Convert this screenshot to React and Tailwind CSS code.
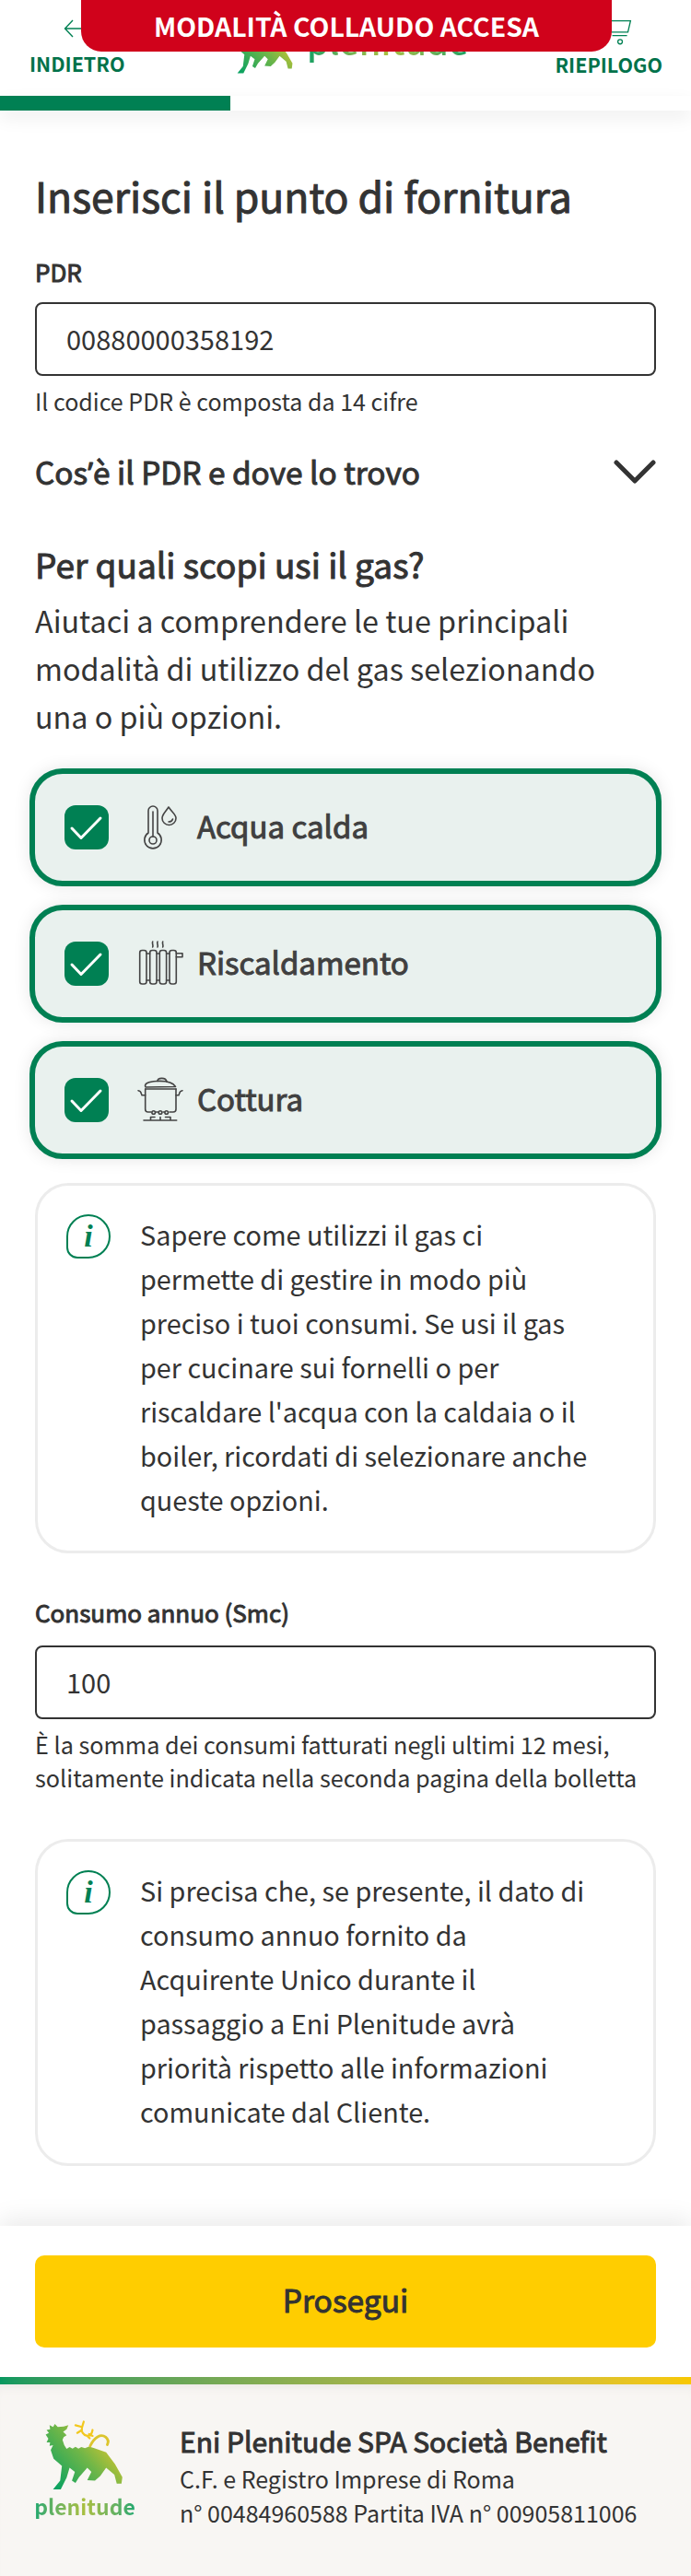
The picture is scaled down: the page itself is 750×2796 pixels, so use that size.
const G = "#008053";
const SB = "font-normal [-webkit-text-stroke:1px] ";

function Lion({ className, id }) {
  return (
    <svg viewBox="80 20 275 240" className={className}>
      <defs>
        <linearGradient id={id} x1="0.05" y1="0.95" x2="0.95" y2="0.25">
          <stop offset="0" stopColor="#00a063" />
          <stop offset="0.55" stopColor="#6fb648" />
          <stop offset="1" stopColor="#e8c82a" />
        </linearGradient>
      </defs>
      <path fill={`url(#${id})`} d="M85 70 L96 64 L88 54 L100 52 L98 38 L110 44 L116 34 L126 44 L146 42 L162 38 L156 52 L144 60 L150 66 L156 72 L146 78 L142 88 L148 106 L156 118 L166 112 L176 117 L186 111 L196 117 L206 112 L218 116 L232 110 L250 116 L290 130 L320 170 L345 214 L342 236 L326 236 L318 206 L290 182 L270 210 L252 226 L226 224 L240 196 L226 182 L198 214 L186 234 L174 226 L184 196 L166 182 L156 216 L136 256 L110 256 L134 226 L140 176 L112 152 L102 122 L110 106 L98 108 L100 96 L88 96 L94 84 Z" />
      <path fill="none" stroke="#dcc52d" strokeWidth="9" strokeLinecap="round" d="M236 108 C250 78 272 66 288 78 C298 86 298 96 294 104" />
      <path fill="none" stroke="#f2c81e" strokeWidth="7" strokeLinecap="round" d="M186 38 L208 44 M214 26 L208 46 C204 58 212 72 226 74 C236 74 242 66 244 54 M192 64 L208 54 M226 74 L234 82 M244 74 L232 68" />
    </svg>
  );
}

function Check() {
  return (
    <div className="w-[48px] h-[48px] rounded-[12px] bg-[#008053] shrink-0">
      <svg viewBox="0 0 48 48" className="w-[48px] h-[48px]">
        <path d="M8 25 L18 35.5 L39 14" fill="none" stroke="#fff" strokeWidth="3" strokeLinecap="round" strokeLinejoin="round" />
      </svg>
    </div>
  );
}

function IconBox({ children }) {
  return (
    <svg viewBox="0 0 48 48" className="w-[48px] h-[48px] ml-[32px] shrink-0 overflow-visible" fill="none" stroke="#444" strokeWidth="1.6" strokeLinecap="round" strokeLinejoin="round">
      {children}
    </svg>
  );
}

const Thermo = () => (
  <IconBox>
    <path d="M11 30 V6 a5 5 0 0 1 10 0 V30 a9.2 9.2 0 1 1 -10 0 Z" />
    <circle cx="16" cy="38" r="4" />
    <path d="M16 7 V34" />
    <path d="M33 2 C29 8 26 10 26 14 a7.5 7.5 0 0 0 15 0 C41 10 37 8 33 2 Z" />
    <path d="M33 18 C35 18 37 17 37.5 15" />
  </IconBox>
);

const Radiator = () => (
  <IconBox>
    <rect x="1.7" y="9.5" width="7.3" height="36.5" rx="2.5" />
    <rect x="12.7" y="9.5" width="7.3" height="36.5" rx="2.5" />
    <rect x="23.3" y="9.5" width="7.3" height="36.5" rx="2.5" />
    <rect x="34" y="9.5" width="7.3" height="36.5" rx="2.5" />
    <path d="M9 13 H12.7 M9 42 H12.7 M20 13 H23.3 M20 42 H23.3 M30.6 13 H34 M30.6 42 H34" />
    <path d="M41.3 12.7 H48 V16.7 H41.3" />
    <path d="M15.7 0 C14.7 2 16.7 4 15.7 6 M21 0 C20 2 22 4 21 6 M26.7 0 C25.7 2 27.7 4 26.7 6" />
  </IconBox>
);

const Pot = () => (
  <IconBox>
    <path d="M7.7 12 V34 a3 3 0 0 0 3 3 H14 M41 12 V34 a3 3 0 0 1 -3 3 H34 M19.5 37 H21.5 M27 37 H28.5" />
    <path d="M7.7 12 H41" />
    <path d="M0 13.7 C2 14 3 15 3.4 17 L4 18.7 H7.7 M48 13.7 C46 14 45 15 44.6 17 L44 18.7 H41" />
    <path d="M8 10 C6 6 11 4 20 3.5 C30 3 38 5 40.5 9.5 Z" />
    <path d="M21 3.5 C21 -0.5 30 -1 31 4" />
    <circle cx="16.7" cy="37.5" r="1.8" />
    <circle cx="24" cy="37.5" r="1.8" />
    <circle cx="30.7" cy="37.5" r="1.8" />
    <path d="M6 46 H41.7 M13.5 46 V42.5 H18 M24 46 V42.5 M35 46 V42.5 H29.5" />
  </IconBox>
);

function Option({ icon, label }) {
  return (
    <div className="h-[128px] ml-[32px] mr-[32px] flex items-center pl-[32px] bg-[#e9f1ee] border-[6px] border-[#008053] rounded-[36px] shadow-[0_0_18px_rgba(0,0,0,0.1)]">
      <Check />
      {icon}
      <span className={SB + "ml-[16px] -mt-[5px] text-[33px] leading-[48px] text-[#404040]"}>{label}</span>
    </div>
  );
}

function InfoCard({ lines, className }) {
  return (
    <div className={"mx-[38px] border-[3px] border-[#ececec] rounded-[36px] bg-white flex pl-[31px] pt-[31px] " + className}>
      <div className="w-[48px] h-[48px] border-[2.5px] border-[#008053] rounded-[24px_24px_24px_12px] shrink-0 flex items-center justify-center font-['Liberation_Serif',serif] italic font-bold text-[34px] leading-none text-[#008053]">i</div>
      <div className="ml-[32px] text-[28.8px] leading-[48px] text-[#333] -mt-[2px]">
        {lines.map((l) => (
          <div key={l} className="whitespace-nowrap">{l}</div>
        ))}
      </div>
    </div>
  );
}

function Input({ value }) {
  return (
    <div className="mx-[38px] h-[80px] border-2 border-[#333] rounded-[8px] flex items-center pl-[32px] text-[29px] text-[#333] bg-white">{value}</div>
  );
}

export default function App() {
  return (
    <div className="w-[750px] h-[2796px] bg-white overflow-hidden flex flex-col font-['Noto_Sans_CJK_SC',sans-serif] text-[#333]">
      <header className="relative h-[104px] shrink-0 bg-white flex justify-between pl-[32px] pr-[31px]">
        <div className="w-[104px] flex flex-col items-start">
          <svg viewBox="0 0 24 20" className="w-[26px] h-[20px] mt-[21px] ml-[36px]" fill="none" stroke={G} strokeWidth="1.4">
            <path d="M10 1 L1.5 10 L10 19 M1.5 10 H24" />
          </svg>
          <span className="mt-[14px] text-[21.5px] leading-[28px] font-bold text-[#00724a]">INDIETRO</span>
        </div>
        <div className="absolute left-[250px] top-[18px] flex items-start">
          <Lion id="lionTop" className="w-[70px] h-[64px]" />
          <span className="ml-[13px] -mt-[2px] text-[38px] leading-[56px] font-medium bg-gradient-to-r from-[#00a063] via-[#a9bf3f] to-[#00a063] bg-clip-text text-transparent">plenitude</span>
        </div>
        <div className="w-[116px] flex flex-col items-end">
          <svg viewBox="0 0 30 34" className="w-[30px] h-[32px] mt-[18px] mr-[30px]" fill="none" stroke={G} strokeWidth="1.4">
            <path d="M1 5 H26 L23 18 H4 M22 22 H5" />
            <circle cx="14" cy="29" r="2.6" />
          </svg>
          <span className="mt-[6px] text-[21.5px] leading-[28px] font-bold text-[#00724a]">RIEPILOGO</span>
        </div>
        <div className="absolute left-[88px] top-0 w-[576px] h-[56px] bg-[#d0021b] rounded-b-[22px] flex items-center justify-center text-white font-bold text-[28.4px] leading-[36px]">
          MODALITÀ COLLAUDO ACCESA
        </div>
      </header>

      <div className="h-[16px] shrink-0 relative shadow-[0_8px_20px_rgba(0,0,0,0.07)] bg-white">
        <div className="h-[16px] w-[250px] bg-[#008053]" />
      </div>

      <main className="flex-1 flex flex-col">
        <h1 className={SB + "mt-[64px] mx-[38px] text-[44.5px] leading-[56px]"}>Inserisci il punto di fornitura</h1>
        <label className={SB + "mt-[38px] mx-[38px] text-[26px] leading-[34px]"}>PDR</label>
        <div className="mt-[16px]"><Input value="00880000358192" /></div>
        <p className="mt-[9px] mx-[38px] text-[25px] leading-[36px] whitespace-nowrap">Il codice PDR è composta da 14 cifre</p>
        <div className="mt-[35px] mx-[38px] flex items-center justify-between h-[48px]">
          <span className={SB + "text-[33.4px] leading-[48px]"}>Cos<span className="font-['Noto_Sans',sans-serif]">’</span>è il PDR e dove lo trovo</span>
          <svg viewBox="0 0 46 26" className="w-[46px] h-[26px]" fill="none" stroke="#333" strokeWidth="5" strokeLinecap="round" strokeLinejoin="round">
            <path d="M3 3 L23 23 L43 3" />
          </svg>
        </div>
        <h2 className={SB + "mt-[50px] mx-[38px] text-[37px] leading-[52px]"}>Per quali scopi usi il gas?</h2>
        <p className="mt-[9px] mx-[38px] text-[32.3px] leading-[52px] w-[650px]">
          Aiutaci a comprendere le tue principali modalità di utilizzo del gas selezionando una o più opzioni.
        </p>
        <div className="mt-[31px] flex flex-col gap-[20px]">
          <Option icon={<Thermo />} label="Acqua calda" />
          <Option icon={<Radiator />} label="Riscaldamento" />
          <Option icon={<Pot />} label="Cottura" />
        </div>
        <InfoCard
          className="mt-[26px] h-[402px]"
          lines={[
            "Sapere come utilizzi il gas ci",
            "permette di gestire in modo più",
            "preciso i tuoi consumi. Se usi il gas",
            "per cucinare sui fornelli o per",
            "riscaldare l'acqua con la caldaia o il",
            "boiler, ricordati di selezionare anche",
            "queste opzioni.",
          ]}
        />
        <label className={SB + "mt-[46px] mx-[38px] text-[26px] leading-[36px]"}>Consumo annuo (Smc)</label>
        <div className="mt-[18px]"><Input value="100" /></div>
        <p className="mt-[9px] mx-[38px] text-[25.2px] leading-[36px] whitespace-nowrap">
          È la somma dei consumi fatturati negli ultimi 12 mesi,<br />solitamente indicata nella seconda pagina della bolletta
        </p>
        <InfoCard
          className="mt-[49px] h-[355px]"
          lines={[
            "Si precisa che, se presente, il dato di",
            "consumo annuo fornito da",
            "Acquirente Unico durante il",
            "passaggio a Eni Plenitude avrà",
            "priorità rispetto alle informazioni",
            "comunicate dal Cliente.",
          ]}
        />
      </main>

      <div className="h-[164px] shrink-0 bg-white shadow-[0_-8px_24px_rgba(0,0,0,0.08)] relative pt-[32px] px-[38px]">
        <button className={SB + "w-full h-[100px] pb-[4px] rounded-[10px] bg-[#ffcd00] text-[33.5px] text-[#333]"}>Prosegui</button>
      </div>

      <div className="h-[8px] shrink-0 bg-gradient-to-r from-[#05985f] to-[#f8c800] relative" />
      <footer className="h-[208px] shrink-0 bg-[#f8f6f3] flex pl-[37px] pt-[38px] shadow-[inset_0_10px_14px_-10px_rgba(0,0,0,0.08)]">
        <div className="w-[110px] flex flex-col items-center">
          <Lion id="lionBottom" className="w-[88px] h-[78px]" />
          <span className="mt-[2px] text-[23px] leading-[28px] font-semibold bg-gradient-to-r from-[#17a86f] via-[#a9bf3f] to-[#17a86f] bg-clip-text text-transparent">plenitude</span>
        </div>
        <div className="ml-[48px] pt-[3px] flex flex-col">
          <span className={SB + "text-[30px] leading-[40px] text-[#333]"}>Eni Plenitude SPA Società Benefit</span>
          <span className="mt-[3px] text-[25px] leading-[37px] text-[#333]">C.F. e Registro Imprese di Roma</span>
          <span className="text-[25px] leading-[37px] text-[#333] whitespace-nowrap">n° 00484960588 Partita IVA n° 00905811006</span>
        </div>
      </footer>
    </div>
  );
}
